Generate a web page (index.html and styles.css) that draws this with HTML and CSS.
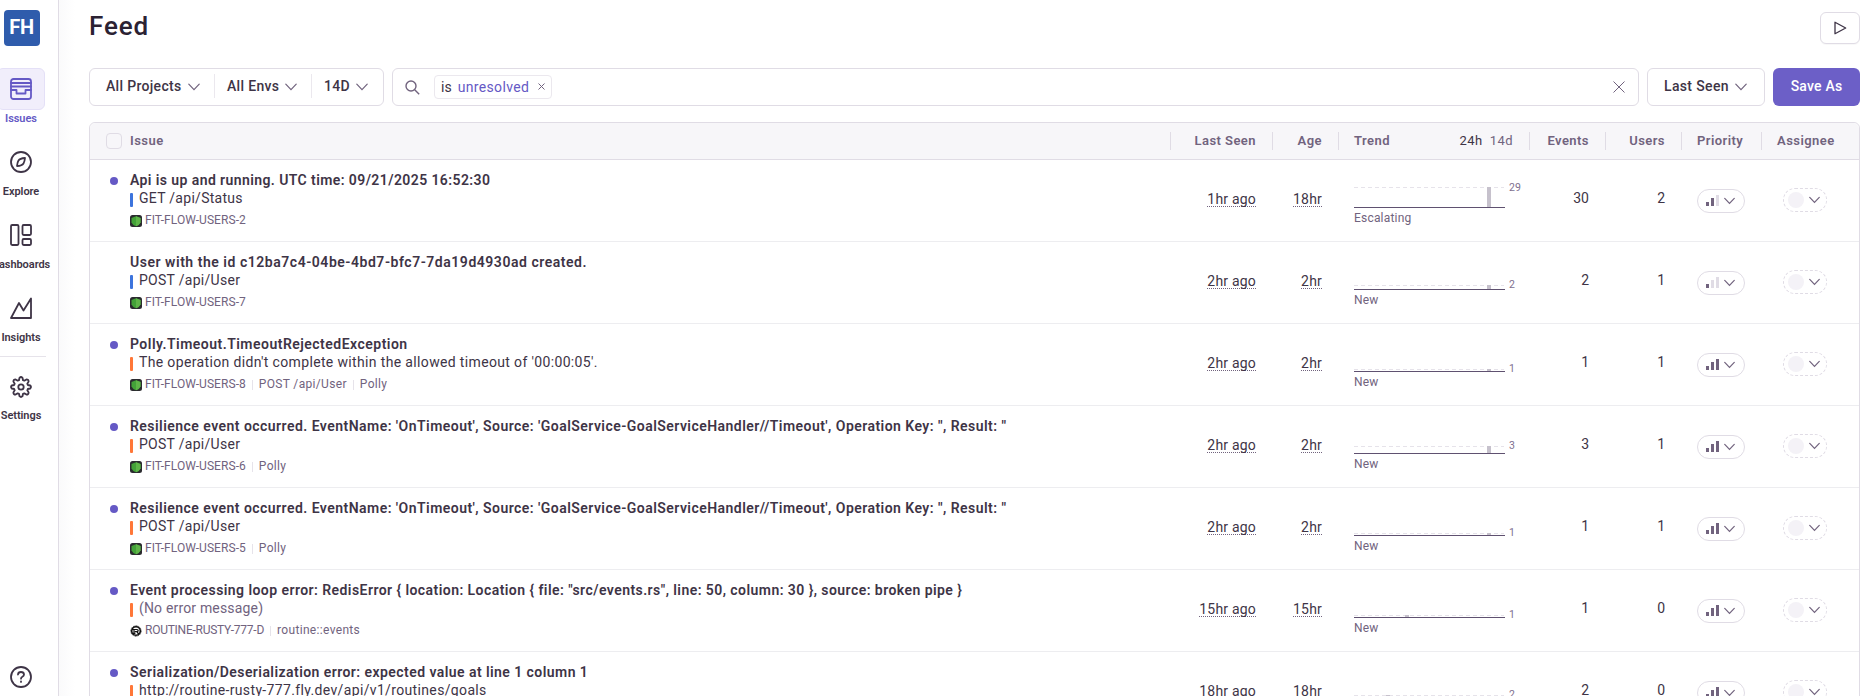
FILE: index.html
```html
<!DOCTYPE html>
<html lang="en">
<head>
<meta charset="utf-8">
<title>Feed</title>
<link rel="stylesheet" href="styles.css">
</head>
<body>
<svg class="defs" width="0" height="0">
  <symbol id="chev" viewBox="0 0 12 8"><path d="M.8 1.200 6 6.600l5.200-5.400"/></symbol>
  <symbol id="dotnet" viewBox="0 0 12 12"><rect width="12" height="12" rx="2.500" fill="#2b2b2f"/><path d="M1.500 3 6 1.200 10.500 3v4.500Q9.500 10 6 11.200 2.500 10 1.500 7.500z" fill="#43a238"/><path d="M6 1.200 10.500 3v4.500Q9.500 10 6 11.200z" fill="#5fb548"/></symbol>
  <symbol id="rust" viewBox="0 0 12 12"><circle cx="6" cy="6" r="4.300" fill="none" stroke="#111" stroke-width="1.600"/><circle cx="6" cy="6" r="5.200" fill="none" stroke="#111" stroke-width=".8" stroke-dasharray="1 .6"/><path d="M2 4.500h5q1.200.1 1.200 1.100T7 6.700H4.800M4 4.500v3.800M2 8.300h3.400M7 6.700l1 1.600h2" fill="none" stroke="#111" stroke-width="1.200"/></symbol>
</svg>
<div class="app">
  <nav class="sidebar">
    <div class="org">FH</div>
    <a class="item active"><span class="box"><svg width="22" height="22" viewBox="0 0 22 22"><rect x="1" y="1" width="20" height="20" rx="2.500"/><path d="M1 5h20M1 8.500h20M1 12h5.500v3.500h9V12H21"/></svg></span><span class="lbl">Issues</span></a>
    <a class="item"><span class="box"><svg width="22" height="22" viewBox="0 0 22 22"><circle cx="11" cy="11" r="10"/><path d="M15 7c-.2 2-.6 4-1.500 5.400S9.500 14.800 7 15c.2-2 .6-4 1.500-5.400S12.500 7.200 15 7z"/></svg></span><span class="lbl">Explore</span></a>
    <a class="item"><span class="box"><svg width="22" height="22" viewBox="0 0 22 22"><rect x="1" y="1" width="7.500" height="20" rx="1.200"/><rect x="12.500" y="1" width="8.500" height="10" rx="1.200"/><rect x="12.500" y="15" width="8.500" height="6" rx="1.200"/></svg></span><span class="lbl">Dashboards</span></a>
    <a class="item"><span class="box"><svg width="22" height="22" viewBox="0 0 22 22"><path d="M1 21 9 6l4.500 7.500L21 1.500V21z"/></svg></span><span class="lbl">Insights</span></a>
    <div class="rule"></div>
    <a class="item last"><span class="box"><svg width="22" height="22" viewBox="0 0 22 22"><path d="M9.500 1.800Q11 .3 12.500 1.800L13 4.200l1.300.5 2.100-1.300q2.200 0 2.200 2.200l-1.300 2.100.5 1.300 2.400.5q1.500 1.500 0 3l-2.400.5-.5 1.300 1.300 2.100q0 2.200-2.200 2.200l-2.100-1.300-1.300.5-.5 2.400q-1.500 1.500-3 0L9 17.800l-1.300-.5-2.100 1.300q-2.200 0-2.200-2.200l1.300-2.100-.5-1.300-2.400-.5q-1.500-1.500 0-3L4.200 9l.5-1.300-1.300-2.100q0-2.200 2.200-2.200l2.100 1.300L9 4.200z"/><circle cx="11" cy="11" r="2.700"/></svg></span><span class="lbl">Settings</span></a>
    <a class="help"><svg width="22" height="22" viewBox="0 0 22 22"><circle cx="11" cy="11" r="10"/><path d="M8 8.500q.2-2.500 3-2.500t3 2.400q0 1.500-1.600 2.300-1.300.6-1.400 2M11 15.300v.6"/></svg></a>
  </nav>
  <main class="main">
    <header class="top"><h1>Feed</h1><button class="play"><svg width="14" height="14" viewBox="0 0 14 14"><path d="M2 1.200 12.700 7 2 12.800z"/></svg></button></header>
    <div class="toolbar">
      <div class="filters">
        <span class="f">All Projects<svg class="chev"><use href="#chev"/></svg></span>
        <span class="f">All Envs<svg class="chev"><use href="#chev"/></svg></span>
        <span class="f">14D<svg class="chev"><use href="#chev"/></svg></span>
      </div>
      <div class="search">
        <svg class="mag" width="15" height="15" viewBox="0 0 15 15"><circle cx="6" cy="6" r="5"/><path d="m9.700 9.700 4.500 4.500"/></svg>
        <span class="token"><span>is</span><b>unresolved</b><svg width="7" height="7" viewBox="0 0 7 7"><path d="m.5.5 6 6m0-6-6 6"/></svg></span>
        <svg class="clear" width="12" height="12" viewBox="0 0 12 12"><path d="m.5.5 11 11m0-11-11 11"/></svg>
      </div>
      <button class="sort">Last Seen<svg class="chev"><use href="#chev"/></svg></button>
      <button class="save">Save As</button>
    </div>
    <section class="table">
      <div class="grid head">
        <div class="c lead"><span class="check"></span></div>
        <div class="c">Issue</div>
        <div class="c sep r">Last Seen</div>
        <div class="c sep r">Age</div>
        <div class="c sep tr"><span>Trend</span><span class="range"><i>24h</i>14d</span></div>
        <div class="c sep r">Events</div>
        <div class="c sep r">Users</div>
        <div class="c sep">Priority</div>
        <div class="c sep">Assignee</div>
      </div>

      <div class="grid row">
        <div class="lead"><span class="dot"></span></div>
        <div class="issue"><div class="t t1">Api is up and running. UTC time: 09/21/2025 16:52:30</div><div class="s info">GET /api/Status</div><div class="m"><svg><use href="#dotnet"/></svg><span class="id">FIT-FLOW-USERS-2</span></div></div>
        <div class="time"><u>1hr ago</u></div><div class="time"><u>18hr</u></div>
        <div class="trend"><svg width="180" height="26"><path class="mx" d="M0 5.500h150"/><rect x="133" y="5" width="4" height="20"/><path class="ax" d="M0 25.500h150.500"/><text x="155" y="9">29</text></svg><span>Escalating</span></div>
        <div class="n">30</div><div class="n">2</div>
        <div class="prio"><span class="pill med"><i></i><i></i><i></i><svg class="sc"><use href="#chev"/></svg></span></div>
        <div class="asg"><span class="who"><i></i><svg class="sc"><use href="#chev"/></svg></span></div>
      </div>

      <div class="grid row">
        <div class="lead"></div>
        <div class="issue"><div class="t t2">User with the id c12ba7c4-04be-4bd7-bfc7-7da19d4930ad created.</div><div class="s info">POST /api/User</div><div class="m"><svg><use href="#dotnet"/></svg><span class="id">FIT-FLOW-USERS-7</span></div></div>
        <div class="time"><u>2hr ago</u></div><div class="time"><u>2hr</u></div>
        <div class="trend"><svg width="180" height="26"><path class="mx" d="M0 21.500h150"/><rect x="133" y="21" width="4" height="4"/><path class="ax" d="M0 25.500h150.500"/><text x="155" y="24">2</text></svg><span>New</span></div>
        <div class="n">2</div><div class="n">1</div>
        <div class="prio"><span class="pill low"><i></i><i></i><i></i><svg class="sc"><use href="#chev"/></svg></span></div>
        <div class="asg"><span class="who"><i></i><svg class="sc"><use href="#chev"/></svg></span></div>
      </div>

      <div class="grid row">
        <div class="lead"><span class="dot"></span></div>
        <div class="issue"><div class="t t3">Polly.Timeout.TimeoutRejectedException</div><div class="s err s3">The operation didn't complete within the allowed timeout of '00:00:05'.</div><div class="m"><svg><use href="#dotnet"/></svg><span class="id">FIT-FLOW-USERS-8</span><span class="x">POST /api/User</span><span class="x">Polly</span></div></div>
        <div class="time"><u>2hr ago</u></div><div class="time"><u>2hr</u></div>
        <div class="trend"><svg width="180" height="26"><path class="mx" d="M0 23.500h150"/><rect x="133" y="23" width="4" height="2"/><path class="ax" d="M0 25.500h150.500"/><text x="155" y="26">1</text></svg><span>New</span></div>
        <div class="n">1</div><div class="n">1</div>
        <div class="prio"><span class="pill"><i></i><i></i><i></i><svg class="sc"><use href="#chev"/></svg></span></div>
        <div class="asg"><span class="who"><i></i><svg class="sc"><use href="#chev"/></svg></span></div>
      </div>

      <div class="grid row">
        <div class="lead"><span class="dot"></span></div>
        <div class="issue"><div class="t t4">Resilience event occurred. EventName: 'OnTimeout', Source: 'GoalService-GoalServiceHandler//Timeout', Operation Key: '', Result: ''</div><div class="s err">POST /api/User</div><div class="m"><svg><use href="#dotnet"/></svg><span class="id">FIT-FLOW-USERS-6</span><span class="x">Polly</span></div></div>
        <div class="time"><u>2hr ago</u></div><div class="time"><u>2hr</u></div>
        <div class="trend"><svg width="180" height="26"><path class="mx" d="M0 18.500h150"/><rect x="133" y="18" width="4" height="7"/><path class="ax" d="M0 25.500h150.500"/><text x="155" y="21">3</text></svg><span>New</span></div>
        <div class="n">3</div><div class="n">1</div>
        <div class="prio"><span class="pill"><i></i><i></i><i></i><svg class="sc"><use href="#chev"/></svg></span></div>
        <div class="asg"><span class="who"><i></i><svg class="sc"><use href="#chev"/></svg></span></div>
      </div>

      <div class="grid row">
        <div class="lead"><span class="dot"></span></div>
        <div class="issue"><div class="t t4">Resilience event occurred. EventName: 'OnTimeout', Source: 'GoalService-GoalServiceHandler//Timeout', Operation Key: '', Result: ''</div><div class="s err">POST /api/User</div><div class="m"><svg><use href="#dotnet"/></svg><span class="id">FIT-FLOW-USERS-5</span><span class="x">Polly</span></div></div>
        <div class="time"><u>2hr ago</u></div><div class="time"><u>2hr</u></div>
        <div class="trend"><svg width="180" height="26"><path class="mx" d="M0 23.500h150"/><rect x="133" y="23" width="4" height="2"/><path class="ax" d="M0 25.500h150.500"/><text x="155" y="26">1</text></svg><span>New</span></div>
        <div class="n">1</div><div class="n">1</div>
        <div class="prio"><span class="pill"><i></i><i></i><i></i><svg class="sc"><use href="#chev"/></svg></span></div>
        <div class="asg"><span class="who"><i></i><svg class="sc"><use href="#chev"/></svg></span></div>
      </div>

      <div class="grid row">
        <div class="lead"><span class="dot"></span></div>
        <div class="issue"><div class="t t6">Event processing loop error: RedisError { location: Location { file: "src/events.rs", line: 50, column: 30 }, source: broken pipe }</div><div class="s err none">(No error message)</div><div class="m"><svg><use href="#rust"/></svg><span class="id long">ROUTINE-RUSTY-777-D</span><span class="x">routine::events</span></div></div>
        <div class="time"><u>15hr ago</u></div><div class="time"><u>15hr</u></div>
        <div class="trend"><svg width="180" height="26"><path class="mx" d="M0 23.500h150"/><rect x="51" y="23" width="4" height="2"/><path class="ax" d="M0 25.500h150.500"/><text x="155" y="26">1</text></svg><span>New</span></div>
        <div class="n">1</div><div class="n">0</div>
        <div class="prio"><span class="pill"><i></i><i></i><i></i><svg class="sc"><use href="#chev"/></svg></span></div>
        <div class="asg"><span class="who"><i></i><svg class="sc"><use href="#chev"/></svg></span></div>
      </div>

      <div class="grid row">
        <div class="lead"><span class="dot"></span></div>
        <div class="issue"><div class="t t7">Serialization/Deserialization error: expected value at line 1 column 1</div><div class="s err s3">http://routine-rusty-777.fly.dev/api/v1/routines/goals</div></div>
        <div class="time"><u>18hr ago</u></div><div class="time"><u>18hr</u></div>
        <div class="trend"><svg width="180" height="26"><path class="mx" d="M0 21.500h150"/><rect x="32" y="21" width="4" height="4"/><path class="ax" d="M0 25.500h150.500"/><text x="155" y="24">2</text></svg></div>
        <div class="n">2</div><div class="n">0</div>
        <div class="prio"><span class="pill"><i></i><i></i><i></i><svg class="sc"><use href="#chev"/></svg></span></div>
        <div class="asg"><span class="who"><i></i><svg class="sc"><use href="#chev"/></svg></span></div>
      </div>
    </section>
  </main>
</div>
</body>
</html>
```
FILE: styles.css
```css
* { box-sizing: border-box; }
body { margin: 0; height: 696px; overflow: hidden; background: #fff; color: #3e3446; font: 14px/18px Roboto, "Open Sans", sans-serif; }
svg { fill: none; stroke: currentColor; flex: none; display: block; }
.defs { position: absolute; }
i, u { font-style: normal; text-decoration: none; }
button { font: inherit; color: inherit; padding: 0; }
.app { display: flex; height: 696px; overflow: hidden; }

.sidebar { width: 59px; flex: none; padding: 10px 16px 8px 0; border-right: 1px solid #e0dce5; display: flex; flex-direction: column; align-items: center; }
.org { width: 36px; height: 36px; flex: none; border-radius: 4px; background: #2f5cac; color: #fff; font-size: 20px; font-weight: 700; line-height: 34px; text-align: center; letter-spacing: -.3px; margin-left: 1px; }
.item { display: flex; flex-direction: column; align-items: center; height: 73px; flex: none; }
.org + .item { margin-top: 22px; }
.box { width: 48px; height: 42px; flex: none; display: flex; align-items: center; justify-content: center; border: 1px solid transparent; border-radius: 6px; }
.item svg, .help svg { stroke-width: 1.800; stroke-linejoin: round; stroke-linecap: round; }
.active { color: #6559c5; }
.active .box { background: #f1eefb; border-color: #e4e0f7; }
.lbl { font-size: 11px; line-height: 16px; font-weight: 600; margin-top: 1px; letter-spacing: -.05px; white-space: nowrap; }
.last .lbl { margin-top: 0; }
.rule { width: 49px; height: 1px; flex: none; background: #e6e3ea; margin: -4px 0 9px; }
.help { margin-top: auto; }

.main { flex: 1; min-width: 0; padding: 12px 14px 0 30px; background: linear-gradient(90deg, #fafafb, #fff 16px); }
.top { display: flex; justify-content: space-between; height: 32px; }
h1 { margin: -2px 0 0 0; font-size: 26px; line-height: 32px; font-weight: 500; color: #2b2233; letter-spacing: .9px; }
.play { width: 40px; height: 32px; border: 1px solid #e0dce5; border-radius: 6px; background: #fff; box-shadow: 0 1px 1px #00000008; display: flex; align-items: center; justify-content: center; }
.play svg { stroke-width: 1.300; stroke-linejoin: round; }

.toolbar { display: flex; gap: 8px; margin-top: 24px; height: 38px; font-weight: 500; }
.filters, .search, .sort { border: 1px solid #e0dce5; border-radius: 6px; background: #fff; display: flex; align-items: center; }
.filters { width: 295px; padding: 0 0 2px 16px; }
.f { display: flex; align-items: center; height: 24px; letter-spacing: .32px; white-space: nowrap; }
.f + .f { border-left: 1px solid #ebe8ee; padding-left: 12px; }
.f:nth-child(1) { width: 108px; }
.f:nth-child(2) { width: 97px; }
.chev { width: 12px; height: 8px; margin-top: 2px; margin-left: 6px; stroke: #71637e; stroke-width: 1.200; stroke-linecap: round; }
.search { flex: 1; padding: 0 13px 0 12px; }
.mag { stroke: #71637e; stroke-width: 1.400; }
.token { display: flex; align-items: center; height: 24px; margin-left: 14px; border: 1px solid #ebe8ee; border-radius: 4px; padding: 0 6px 1px; font-weight: 400; }
.token b { font-weight: 400; color: #6559c5; margin: 0 9px 0 6px; letter-spacing: .35px; }
.token svg, .clear { stroke: #71637e; }
.clear { margin-left: auto; }
.sort { width: 118px; padding: 0 0 2px 16px; letter-spacing: .35px; }
.save { width: 87px; border: 0; border-radius: 6px; background: #6c5fc7; color: #fff; letter-spacing: .2px; padding-bottom: 2px; }

.table { margin-top: 16px; border: 1px solid #e0dce5; border-radius: 6px; background: #fff; }
.grid { display: grid; grid-template-columns: 40px 1fr 102px 66px 191px 76px 76px 80px 98px; }
.head { height: 37px; align-items: center; background: #f7f6f9; border-bottom: 1px solid #e0dce5; border-radius: 6px 6px 0 0; color: #71637e; font-size: 13px; font-weight: 600; letter-spacing: .45px; }
.check { display: block; width: 16px; height: 16px; margin-left: 16px; border: 1px solid #e0dce5; border-radius: 4px; }
.sep { border-left: 1px solid #e0dce5; padding: 0 16px 0 15px; white-space: nowrap; }
.r { text-align: right; }
.tr { display: flex; justify-content: space-between; }
.range { font-weight: 400; }
.range i { color: #3e3446; margin-right: 7px; }

.row { height: 82px; border-bottom: 1px solid #ededf0; }
.dot { display: block; width: 8px; height: 8px; border-radius: 50%; background: #6559c5; margin: 17px 0 0 20px; }
.issue { padding-top: 11px; white-space: nowrap; min-width: 0; }
.t { font-weight: 600; }
.t1 { letter-spacing: .41px; }
.t2 { letter-spacing: .53px; }
.t3 { letter-spacing: .48px; }
.t4 { letter-spacing: .46px; }
.t6, .t7 { letter-spacing: .44px; }
.s { display: flex; align-items: center; letter-spacing: .28px; }
.s3 { letter-spacing: .35px; }
.s::before { content: ""; width: 3px; height: 14px; margin: 3px 6px 0 0; border-radius: 1px; background: #3c74dd; }
.err::before { background: #ff7738; }
.none { color: #71637e; letter-spacing: .17px; }
.m { display: flex; align-items: center; margin-top: 5px; height: 16px; color: #71637e; font-size: 12px; line-height: 16px; }
.m svg { width: 12px; height: 12px; margin: 2px 3px 0 0; stroke: none; }
.id { letter-spacing: .07px; }
.long { letter-spacing: -.25px; }
.x { position: relative; margin-left: 13px; letter-spacing: .33px; }
.x::before { content: ""; position: absolute; left: -7px; top: 4px; height: 10px; border-left: 1px solid #e6e3ea; }
.time { padding: 30px 16px 0; text-align: right; white-space: nowrap; letter-spacing: .2px; }
.time u { display: inline-block; line-height: 16px; height: 16px; border-bottom: 1px dotted #71637e; }
.trend { padding: 22px 0 0 16px; color: #71637e; font-size: 12px; line-height: 16px; letter-spacing: .2px; }
.trend svg { overflow: visible; margin-bottom: 2px; shape-rendering: crispEdges; }
.trend rect { fill: #c6c1cc; stroke: none; }
.trend text { fill: #80708f; stroke: none; font-size: 10.500px; }
.mx { stroke: #e6e3ea; stroke-dasharray: 4 3; }
.ax { stroke: #5f5170; stroke-width: 1px; }
.n { padding: 29px 16px 0 0; text-align: right; }
.prio { padding: 29px 0 0 16px; }
.pill, .who { display: flex; height: 24px; border: 1px solid #e0dce5; border-radius: 12px; }
.pill { width: 48px; align-items: flex-end; padding: 0 0 6px 8px; gap: 2px; }
.pill i { width: 3px; height: 4px; background: #71637e; }
.pill i:nth-child(2) { height: 8px; }
.pill i:nth-child(3) { height: 11px; }
.med i:nth-child(3), .low i:nth-child(2), .low i:nth-child(3) { background: #e0dce5; }
.sc { width: 11px; height: 8px; stroke: #71637e; stroke-width: 1.300; stroke-linecap: round; }
.pill .sc { margin: 0 0 1px 3px; }
.asg { padding: 28px 0 0 22px; }
.who { width: 44px; border-style: dashed; align-items: center; padding-left: 4px; }
.who i { width: 16px; height: 16px; border-radius: 50%; background: #f4f2f7; margin-right: 5px; }
```
